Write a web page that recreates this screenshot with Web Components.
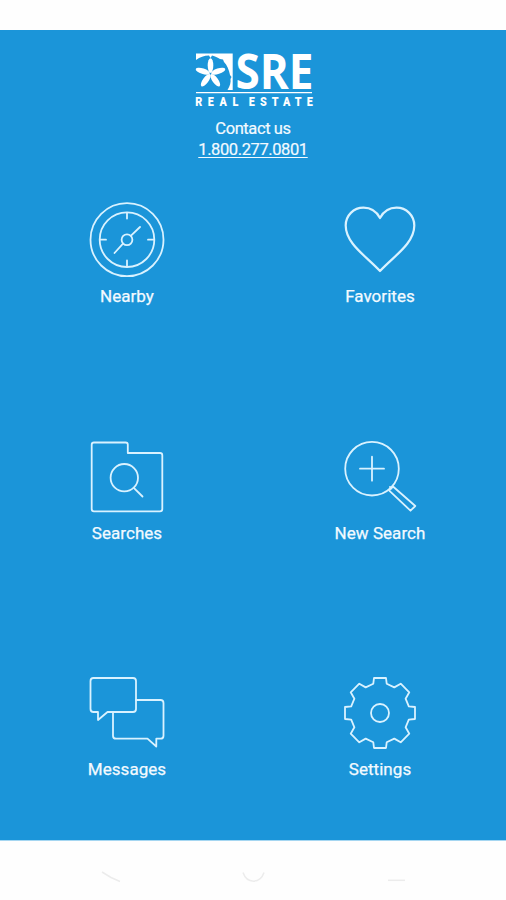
<!DOCTYPE html>
<html lang="en">
<head>
<meta charset="utf-8">
<title>SRE Real Estate</title>
<style>
  body {
    margin: 0;
    background: #fefefe;
    font-family: Roboto, sans-serif;
  }
</style>
</head>
<body>

<sre-home>
  <sre-header slot="header" phone="1.800.277.0801">Contact us</sre-header>
  <menu-tile label="Nearby">
    <svg viewBox="0 0 81 80">
      <circle cx="41" cy="39.7" r="36.5"/>
      <circle cx="41" cy="39.7" r="27.3"/>
      <circle cx="41" cy="39.7" r="5.4"/>
      <path d="M45 35.7L54 27M37 43.7L28.5 53M14 39.7h6M62 39.7h6M41 13v5.5M41 60.5v6"/>
    </svg>
  </menu-tile>
  <menu-tile label="Favorites">
    <svg viewBox="0 0 81 80" style="stroke-width: 2.2">
      <path d="M41 18C37.5 11.5 31.5 7.7 24.5 7.7C14.5 7.7 6.7 15.5 6.7 25.5C6.7 43.5 27 56 41 71C55 56 75.3 43.5 75.3 25.5C75.3 15.5 67.5 7.7 57.5 7.7C50.5 7.7 44.5 11.5 41 18Z"/>
    </svg>
  </menu-tile>
  <menu-tile label="Searches">
    <svg viewBox="0 0 81 80">
      <path d="M8 5.5H39.5Q41.8 5.5 41.8 7.5V16H74Q76.3 16 76.3 18.3V72Q76.3 74.3 74 74.3H8Q5.7 74.3 5.7 72V7.8Q5.7 5.5 8 5.5Z"/>
      <circle cx="38.3" cy="40.7" r="13.7"/>
      <path d="M48.3 51.3L56.5 59.5"/>
    </svg>
  </menu-tile>
  <menu-tile label="New Search">
    <svg viewBox="0 0 81 80">
      <circle cx="33" cy="31.7" r="26.8"/>
      <path d="M21 31.7H45M33 19.7V43.7M54 49.5L76.3 69L71.5 73.7L50 53.3ZM51 50L52.5 51.5"/>
    </svg>
  </menu-tile>
  <menu-tile label="Messages">
    <svg viewBox="0 0 81 80">
      <path d="M7.5 5H47Q50 5 50 8V36Q50 39 47 39H21.5L12 47V39H7.5Q4.5 39 4.5 36V8Q4.5 5 7.5 5Z"/>
      <path d="M50 27H74.5Q77.5 27 77.5 30V62.7Q77.5 65.7 74.5 65.7H70.3V73.5L61.5 65.7H30Q27 65.7 27 62.7V39"/>
    </svg>
  </menu-tile>
  <menu-tile label="Settings">
    <svg viewBox="-41 -40 81 80">
      <path d="M-6-35H6L6.7-29.3L14.3-25.6L20.7-29.3L29.3-20.7L25.6-14.3L28.8-6.7L35-6V6L28.8 6.7L25.6 14.3L29.3 20.7L20.7 29.3L14.3 25.6L6.7 29.3L6 35H-6L-6.7 29.3L-14.3 25.6L-20.7 29.3L-29.3 20.7L-25.6 14.3L-28.8 6.7L-35 6V-6L-28.8-6.7L-25.6-14.3L-29.3-20.7L-20.7-29.3L-14.3-25.6L-6.7-29.3Z"/>
      <circle r="9"/>
    </svg>
  </menu-tile>
</sre-home>
<nav-bar></nav-bar>

<template id="home-template">
  <style>
    :host {
      display: block;
      box-sizing: border-box;
      height: 841px;
      padding-top: 22px;
      border-top: 30px solid #fefefe;
      border-bottom: 1px solid #a5d6f1;
      background: #1b95d9;
      color: #f3faff;
    }
    .tiles {
      display: grid;
      grid-template-columns: 1fr 1fr;
      grid-template-rows: 237px 236px 160px;
    }
  </style>
  <slot name="header"></slot>
  <div class="tiles"><slot></slot></div>
</template>

<template id="header-template">
  <style>
    :host {
      display: flex;
      flex-direction: column;
      align-items: center;
      height: 148px;
      font-size: 16.5px;
      line-height: 21px;
      letter-spacing: -.4px;
      -webkit-text-stroke: .2px;
    }
    .logo {
      width: 118px;
      height: 55px;
      margin: 0 0 11px 1px;
      fill: #fff;
      overflow: visible;
      letter-spacing: 0;
      -webkit-text-stroke: 0;
    }
    .name {
      font: 700 49px "Open Sans", sans-serif;
    }
    .tagline {
      font: 900 13.5px Roboto, sans-serif;
    }
    a {
      color: inherit;
      text-underline-offset: 2px;
      text-decoration-thickness: 1px;
    }
  </style>
  <svg class="logo" viewBox="195 52 118 55">
    <path d="M196 53.5H232.7V90H227.5C230 86 231 82 230.5 79L231.5 77L230 75C229 70 227 65 224 62L223 59.5L220 59C217 57 214 56 212 55.5L210.5 58L209 55.5C204 55.5 200 57 196 60Z"/>
    <ellipse id="petal" cx="210.5" cy="65.6" rx="2.8" ry="7.4"/>
    <use href="#petal" transform="rotate(72 210.5 73.7)"/>
    <use href="#petal" transform="rotate(144 210.5 73.7)"/>
    <use href="#petal" transform="rotate(216 210.5 73.7)"/>
    <use href="#petal" transform="rotate(288 210.5 73.7)"/>
    <text class="name" x="235.5" y="89.3" textLength="78" lengthAdjust="spacingAndGlyphs">SRE</text>
    <path d="M196 92H312V93.3H196Z"/>
    <!-- squeezed so the tagline letters stay narrow -->
    <g transform="translate(196 105.5) scale(.8 1)">
      <text class="tagline" x="-1" textLength="54" lengthAdjust="spacing">REAL</text>
      <text class="tagline" x="66" textLength="80" lengthAdjust="spacing">ESTATE</text>
    </g>
  </svg>
  <slot></slot>
  <a></a>
</template>

<template id="tile-template">
  <style>
    :host {
      display: flex;
      flex-direction: column;
      align-items: center;
      font-size: 17px;
      line-height: 20px;
    }
    ::slotted(svg) {
      width: 81px;
      height: 80px;
      fill: none;
      stroke: #d9f2ff;
      stroke-width: 1.8;
      stroke-linecap: round;
      stroke-linejoin: round;
    }
    .label {
      margin-top: 6px;
      padding-left: 1px;
      letter-spacing: .05px;
      -webkit-text-stroke: .25px;
    }
  </style>
  <slot></slot>
  <span class="label"></span>
</template>

<template id="nav-template">
  <style>
    :host {
      display: block;
      height: 59px;
    }
    svg {
      display: block;
      fill: none;
      stroke: #ececec;
      stroke-width: 1.5;
    }
  </style>
  <svg width="506" height="59" viewBox="0 841 506 59">
    <path d="M102 872L111 877.5L120 881.5"/>
    <path d="M243 872.5C247 884 260 884 264 872.5"/>
    <path d="M388 880.3H405"/>
  </svg>
</template>

<script>
function cloneTemplate(id) {
  return document.getElementById(id).content.cloneNode(true)
}

class SreHome extends HTMLElement {
  constructor() {
    super()
    this.attachShadow({mode: 'open'}).appendChild(cloneTemplate('home-template'))
  }
}

class SreHeader extends HTMLElement {
  constructor() {
    super()
    this.attachShadow({mode: 'open'}).appendChild(cloneTemplate('header-template'))

    const link = this.shadowRoot.querySelector('a')
    const phone = this.getAttribute('phone') || ''
    link.textContent = phone
    link.href = 'tel:' + phone
  }
}

class MenuTile extends HTMLElement {
  constructor() {
    super()
    this.attachShadow({mode: 'open'}).appendChild(cloneTemplate('tile-template'))
    this.shadowRoot.querySelector('.label').textContent = this.getAttribute('label')
  }
}

class NavBar extends HTMLElement {
  constructor() {
    super()
    this.attachShadow({mode: 'open'}).appendChild(cloneTemplate('nav-template'))
  }
}

customElements.define('sre-home', SreHome)
customElements.define('sre-header', SreHeader)
customElements.define('menu-tile', MenuTile)
customElements.define('nav-bar', NavBar)
</script>
</body>
</html>
